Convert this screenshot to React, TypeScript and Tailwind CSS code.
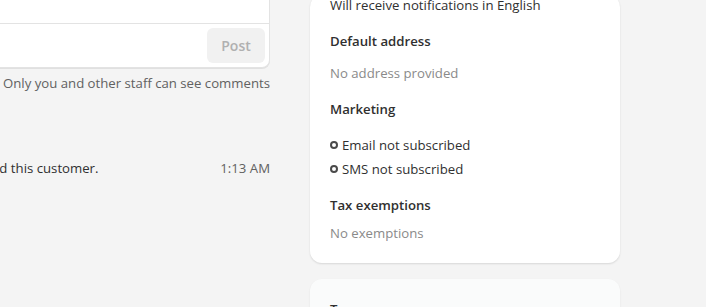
import React from 'react';

const Ring: React.FC = () => (
  <span className="inline-block w-[8px] h-[8px] rounded-full border-2 border-[#4a4a4a] mr-[4px] shrink-0" />
);

interface SectionProps {
  title: string;
  children: React.ReactNode;
  gap?: string;
}

const Section: React.FC<SectionProps> = ({ title, children, gap = 'mt-3' }) => (
  <div className="mt-4">
    <div className="font-semibold text-[#303030] leading-5">{title}</div>
    <div className={gap}>{children}</div>
  </div>
);

export default function App() {
  return (
    <div
      className="w-[706px] h-[307px] overflow-hidden bg-[#f4f4f4] text-[13.2px] text-[#303030]"
      style={{ fontFamily: '"Open Sans", "Noto Sans", sans-serif' }}
    >
      <div className="flex gap-10 -ml-[330px]">
        {/* Left column: comment box + timeline */}
        <div className="w-[600px] shrink-0">
          <div className="-mt-[40px] bg-white rounded-b-lg border border-t-0 border-[#e3e3e3] shadow-[0_1px_0_rgba(0,0,0,0.08)]">
            <div className="h-[64px] border-b border-[#e3e3e3]" />
            <div className="flex justify-end p-1">
              <button className="w-[58px] h-[35px] rounded-md bg-[#f1f1f1] text-[#b0b0b0] text-[14px] font-semibold">
                Post
              </button>
            </div>
          </div>
          <div className="text-right text-[#616161] leading-5 mt-[5px]">
            Only you and other staff can see comments
          </div>
          <div className="flex justify-between items-center leading-5 mt-[65px] pl-[264px]">
            <span>You created this customer.</span>
            <span className="text-[#616161]">1:13 AM</span>
          </div>
        </div>

        {/* Right column: customer cards */}
        <div className="w-[310px] shrink-0">
          <div className="-mt-[5px] bg-white rounded-xl shadow-[0_1px_2px_rgba(0,0,0,0.12)] px-5 pb-5">
            <div className="leading-5">Will receive notifications in English</div>
            <Section title="Default address">
              <div className="text-[#8a8a8a] leading-5">No address provided</div>
            </Section>
            <Section title="Marketing" gap="mt-4">
              <div className="flex items-center leading-5">
                <Ring />
                Email not subscribed
              </div>
              <div className="flex items-center leading-5 mt-1">
                <Ring />
                SMS not subscribed
              </div>
            </Section>
            <Section title="Tax exemptions" gap="mt-2">
              <div className="text-[#8a8a8a] leading-5">No exemptions</div>
            </Section>
          </div>
          <div className="mt-4 bg-[#fafbfb] rounded-xl shadow-[0_1px_2px_rgba(0,0,0,0.08)] px-5 pt-5 pb-5">
            <div className="font-semibold leading-5">Tags</div>
          </div>
        </div>
      </div>
    </div>
  );
}
